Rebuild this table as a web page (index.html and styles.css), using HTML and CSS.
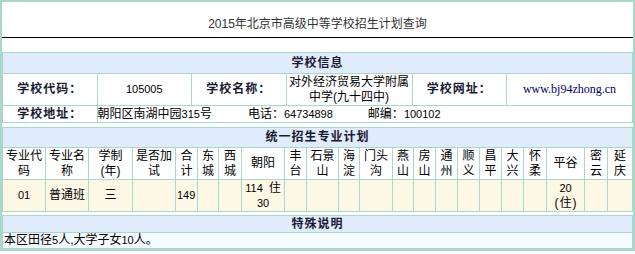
FILE: index.html
```html
<!DOCTYPE html>
<html lang="zh-CN">
<head>
<meta charset="utf-8">
<title>2015年北京市高级中等学校招生计划查询</title>
<link rel="stylesheet" href="styles.css">
</head>
<body>
<div class="page">
  <div class="title">2015年北京市高级中等学校招生计划查询</div>

  <table class="grid info">
    <colgroup>
      <col class="p15"><col class="p15"><col class="p15"><col class="p20"><col class="p15"><col class="p20">
    </colgroup>
    <tr class="head"><th colspan="6">学校信息</th></tr>
    <tr class="r1">
      <td class="label">学校代码：</td>
      <td class="center"><span class="num">105005</span></td>
      <td class="label">学校名称：</td>
      <td class="center">对外经济贸易大学附属<br>中学(九十四中)</td>
      <td class="label">学校网址：</td>
      <td class="center url">www.bj94zhong.cn</td>
    </tr>
    <tr class="r2">
      <td class="label">学校地址：</td>
      <td colspan="5" class="addr">朝阳区南湖中园<span class="num">315</span>号<span class="gap">电话：<span class="num">64734898</span></span><span class="gap2">邮编：<span class="num">100102</span></span></td>
    </tr>
  </table>

  <table class="grid plan">
    <colgroup>
      <col class="w43"><col class="w43"><col class="w44"><col class="w43">
      <col class="w22"><col class="w21"><col class="w23"><col class="w43">
      <col class="w22"><col class="w32"><col class="w21"><col class="w33">
      <col class="w21"><col class="w22"><col class="w22"><col class="w22">
      <col class="w22"><col class="w22"><col class="w23"><col class="w38">
      <col class="w23"><col class="w25">
    </colgroup>
    <tr class="head"><th colspan="22">统一招生专业计划</th></tr>
    <tr class="cols">
      <td>专业代<br>码</td>
      <td>专业名<br>称</td>
      <td>学制<br>(年)</td>
      <td>是否加<br>试</td>
      <td>合<br>计</td>
      <td>东<br>城</td>
      <td>西<br>城</td>
      <td>朝阳</td>
      <td>丰<br>台</td>
      <td>石景<br>山</td>
      <td>海<br>淀</td>
      <td>门头<br>沟</td>
      <td>燕<br>山</td>
      <td>房<br>山</td>
      <td>通<br>州</td>
      <td>顺<br>义</td>
      <td>昌<br>平</td>
      <td>大<br>兴</td>
      <td>怀<br>柔</td>
      <td>平谷</td>
      <td>密<br>云</td>
      <td>延<br>庆</td>
    </tr>
    <tr class="data">
      <td><span class="num">01</span></td>
      <td>普通班</td>
      <td>三</td>
      <td></td>
      <td class="left"><span class="num">149</span></td>
      <td></td>
      <td></td>
      <td><span class="num sp">114</span>住<br><span class="num">30</span></td>
      <td></td><td></td><td></td><td></td><td></td><td></td>
      <td></td><td></td><td></td><td></td><td></td>
      <td><span class="num">20</span><br><span class="paren">(</span>住<span class="paren">)</span></td>
      <td></td>
      <td></td>
    </tr>
  </table>

  <table class="grid notes">
    <tr class="head"><th>特殊说明</th></tr>
    <tr class="note"><td>本区田径<span class="num">5</span>人,大学子女<span class="num">10</span>人。</td></tr>
  </table>
</div>
</body>
</html>
```

FILE: styles.css
```css
html, body {
  margin: 0;
  padding: 0;
  background: #ffffff;
}

body {
  font-family: "Liberation Sans", "Noto Sans CJK SC", sans-serif;
  font-size: 12px;
  color: #000000;
}

.page {
  width: 635px;
  height: 251px;
  box-sizing: border-box;
  border: 2px solid #a9d8cb;
  overflow: hidden;
}

.title {
  height: 36px;
  box-sizing: border-box;
  padding-top: 14px;
  line-height: 16px;
  text-align: center;
  color: #333333;
  border-bottom: 1px solid #000000;
}

.grid {
  width: 631px;
  border-collapse: collapse;
  table-layout: fixed;
}

.grid th,
.grid td {
  border: 1px solid #a9d8cb;
  padding: 0;
  line-height: 15px;
}

.grid .head th {
  background: #e0ebfb;
  font-size: 12px;
  letter-spacing: 1px;
  font-weight: bold;
  color: #1a1a33;
  text-align: center;
}

.info {
  margin-top: 14px;
}

.info .head th {
  height: 20px;
}

.plan {
  margin-top: 4px;
}

.plan .head th {
  height: 19px;
}

.notes {
  margin-top: 3px;
}

.notes .head th {
  height: 16px;
}

.p15 { width: 15%; }
.p20 { width: 20%; }

.label {
  text-align: center;
  font-weight: bold;
  letter-spacing: 1px;
  color: #1a1a33;
}

.center {
  text-align: center;
}

.info .r1 td {
  height: 31px;
}

.info .r2 td {
  height: 16px;
}

.addr {
  text-align: left;
  padding-left: 1px;
}

.gap {
  margin-left: 36px;
}

.gap2 {
  margin-left: 35px;
}

.num {
  font-size: 11px;
}

.sp {
  margin-right: 6px;
}

.paren {
  padding: 0 1px;
}

.url {
  font-family: "Liberation Serif", serif;
  color: #000066;
}

.w21 { width: 21px; }
.w22 { width: 22px; }
.w23 { width: 23px; }
.w25 { width: 25px; }
.w32 { width: 32px; }
.w33 { width: 33px; }
.w38 { width: 38px; }
.w43 { width: 43px; }
.w44 { width: 44px; }

.plan .cols td {
  background: #ffffff;
  text-align: center;
  height: 31px;
  vertical-align: middle;
}

.plan .data td {
  background: #fdf8e5;
  text-align: center;
  height: 31px;
}

.plan .data td.left {
  text-align: left;
  padding-left: 1px;
}

.notes .note td {
  background: #f6fbff;
  text-align: left;
  height: 15px;
  padding-left: 1px;
}
```
